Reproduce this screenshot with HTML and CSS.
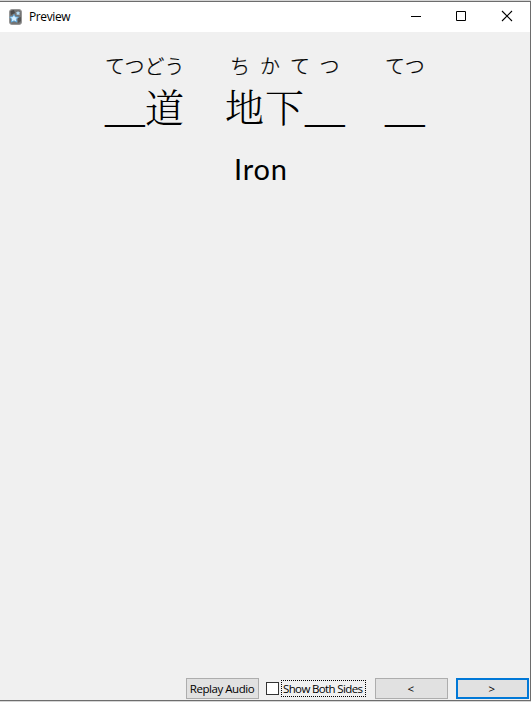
FILE: index.html
```html
<!DOCTYPE html>
<html lang="ja">
<head>
<meta charset="utf-8">
<title>Preview</title>
<link rel="stylesheet" href="styles.css">
</head>
<body>
<div class="window">
  <header class="titlebar">
    <svg class="app-icon" width="13" height="16" viewBox="0 0 13 16">
      <rect x=".5" y=".5" width="12" height="15" rx="2.500" fill="#747474" stroke="#969696"/>
      <path d="M1.500 2l3.500-1 1 3-4 2z" fill="#4b4b4b"/>
      <path d="M9 9l3-1v4l-3 2z" fill="#555"/>
      <path d="M5 5.500l1.400 2.500 3 .1-2 2 .5 3-2.900-1.300-2.700 1.300.4-3-2-2 3-.4z" fill="#d5eeff" stroke="#55a9e4" stroke-width=".8"/>
      <path d="M9 2l.8 1.300 1.500.1-1 1.200.3 1.600-1.500-.7-1.400.6.1-1.500-1-1.100 1.500-.2z" fill="#b4ddf8"/>
    </svg>
    <span class="title">Preview</span>
    <div class="controls">
      <svg width="46" height="30" viewBox="0 0 46 30"><path d="M16 14.500h10" stroke="#000"/></svg>
      <svg width="46" height="30" viewBox="0 0 46 30"><path d="M15.500 9.500h9v9h-9z" fill="none" stroke="#000"/></svg>
      <svg width="44" height="30" viewBox="0 0 44 30"><path d="M15 9l10 10M25 9l-10 10" stroke="#000" stroke-width="1.100"/></svg>
    </div>
  </header>
  <main class="card">
    <div class="words">
      <div class="word"><span class="reading">てつどう</span><span class="base"><span class="blank">__</span>道</span></div>
      <div class="word"><span class="reading spaced">ちかてつ</span><span class="base">地下<span class="blank">__</span></span></div>
      <div class="word"><span class="reading">てつ</span><span class="base"><span class="blank">__</span></span></div>
    </div>
    <div class="meaning">Iron</div>
  </main>
  <footer class="toolbar">
    <button class="button replay">Replay Audio</button>
    <label class="both"><span class="box"></span><span class="both-label">Show Both Sides</span></label>
    <button class="button prev">&lt;</button>
    <button class="button next">&gt;</button>
  </footer>
</div>
</body>
</html>
```
FILE: styles.css
```css
* { box-sizing: border-box; }
body { margin: 0; background: #d5d5d5; }
.window {
  width: 531px;
  height: 700px;
  margin-top: 1px;
  border: 1px solid #6d6d6d;
  border-left: 0;
  background: #f0f0f0;
  color: #000;
  display: flex;
  flex-direction: column;
  font: 12px "Open Sans", sans-serif;
}
.titlebar {
  height: 30px;
  flex: none;
  background: #fff;
  display: flex;
  align-items: center;
}
.app-icon { margin-left: 9px; }
.title { margin-left: 7px; font-size: 12px; line-height: 16px; letter-spacing: -.4px; margin-top: -1px; }
.controls { margin-left: auto; display: flex; margin-right: -1px; }
.card { flex: 1; padding-top: 20px; }
.words { display: flex; gap: 40px; padding-left: 105px; }
.word { display: flex; flex-direction: column; }
.reading {
  font: 300 20px/28px "Noto Sans CJK JP", sans-serif;
  -webkit-text-stroke: .25px #000;
  white-space: nowrap;
}
.spaced { letter-spacing: 10px; padding-left: 5px; margin-right: -5px; }
.base {
  font: 300 39px/50px "Noto Serif CJK JP", "Noto Sans CJK JP", sans-serif;
  height: 50px;
  letter-spacing: 1px;
  white-space: nowrap;
}
.blank { font-family: "Liberation Serif", serif; font-size: 40px; letter-spacing: -.25px; margin-right: .5px; }
.meaning {
  font: 29px/40px "Lato", sans-serif;
  letter-spacing: .8px;
  padding-left: 234px;
  margin-top: 19px;
}
.toolbar {
  height: 22px;
  flex: none;
  display: flex;
  align-items: flex-start;
  padding-left: 186px;
}
.button {
  height: 21px;
  padding: 0;
  border: 1px solid #adadad;
  background: #e1e1e1;
  color: #000;
  font: 11.500px/19px "Open Sans", sans-serif;
  letter-spacing: -.45px;
}
.replay { width: 73px; padding-right: 1px; }
.both { display: flex; align-items: center; margin-left: 7px; width: 100px; height: 21px; }
.box { width: 13px; height: 13px; flex: none; border: 1px solid #333; background: #fff; }
.both-label {
  flex: none;
  width: 85px;
  height: 17px;
  margin-left: 2px;
  padding-left: 1px;
  border: 1px dotted #000;
  font-size: 11.500px;
  line-height: 16px;
  letter-spacing: -.63px;
  white-space: nowrap;
}
.prev { width: 73px; margin-left: 9px; padding-right: 2px; }
.next { width: 73px; margin-left: 8px; padding-right: 2px; border: 2px solid #0078d7; line-height: 17px; }
```
